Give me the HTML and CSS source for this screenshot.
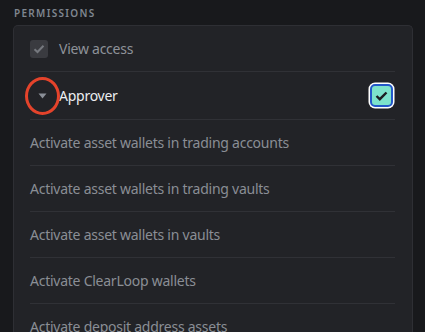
FILE: index.html
```html
<!DOCTYPE html>
<html>
<head>
<meta charset="utf-8">
<link rel="stylesheet" href="styles.css">
</head>
<body>
<div class="page">
  <div class="label">PERMISSIONS</div>
  <div class="card">
    <div class="row">
      <span class="cb cb-disabled">
        <svg width="12" height="10" viewBox="0 0 12 10"><path d="M1.5 5.2 L4.5 8 L10.5 1.8" fill="none" stroke="#75787e" stroke-width="2"/></svg>
      </span>
      <span class="text muted">View access</span>
    </div>
    <div class="row row-approver">
      <span class="caret-wrap">
        <svg width="9" height="6" viewBox="0 0 9 6"><path d="M0.5 0.5 L8.5 0.5 L4.5 5.5 Z" fill="#8a8f97"/></svg>
        <span class="ring"></span>
      </span>
      <span class="text strong">Approver</span>
      <span class="cb-on">
        <svg width="13" height="10" viewBox="0 0 13 10"><path d="M1.5 5 L4.8 8.2 L11.5 1.5" fill="none" stroke="#1d1e22" stroke-width="2.4"/></svg>
      </span>
    </div>
    <div class="row"><span class="text sub">Activate asset wallets in trading accounts</span></div>
    <div class="row"><span class="text sub">Activate asset wallets in trading vaults</span></div>
    <div class="row"><span class="text sub">Activate asset wallets in vaults</span></div>
    <div class="row"><span class="text sub">Activate ClearLoop wallets</span></div>
    <div class="row"><span class="text sub">Activate deposit address assets</span></div>
  </div>
</div>
</body>
</html>
```
FILE: styles.css
```css
html, body {
  margin: 0;
  padding: 0;
  background: #18191c;
  overflow: hidden;
}
body {
  font-family: "Noto Sans", "Liberation Sans", sans-serif;
  width: 425px;
  height: 332px;
}
.page {
  padding: 6px 12px 0 13px;
}
.label {
  font-size: 10px;
  font-weight: 600;
  letter-spacing: 1.3px;
  color: #7f8690;
  line-height: 14px;
  padding-left: 1px;
  margin-bottom: 5px;
}
.card {
  background: #222327;
  border: 1px solid #2e2f34;
  border-bottom: none;
  border-radius: 5px 5px 0 0;
  padding: 0 17px 0 16px;
}
.row {
  display: flex;
  align-items: center;
  height: 45px;
  border-bottom: 1px solid #303136;
}
.row-approver {
  height: 47px;
}
.text {
  font-size: 14px;
  line-height: 18px;
  letter-spacing: -0.25px;
}
.muted { color: #8e9299; margin-left: 11px; }
.strong { color: #eceef0; margin-left: 0; }
.sub { color: #8a8e95; }
.cb {
  width: 18px;
  height: 18px;
  border-radius: 3px;
  display: flex;
  align-items: center;
  justify-content: center;
}
.cb-disabled {
  background: #3a3b40;
}
.caret-wrap {
  position: relative;
  width: 29px;
  height: 18px;
  display: flex;
  align-items: center;
  padding-left: 8px;
  box-sizing: border-box;
}
.ring {
  position: absolute;
  left: -5px;
  top: -10px;
  width: 29px;
  height: 32px;
  border: 3px solid #e4432b;
  border-radius: 50%;
}
.cb-on {
  margin-left: auto;
  width: 19px;
  height: 19px;
  border-radius: 5px;
  background: #7de3cc;
  border: 2px solid #2358c9;
  box-shadow: 0 0 0 1.5px #ffffff;
  display: flex;
  align-items: center;
  justify-content: center;
  margin-right: 2px;
}
```
